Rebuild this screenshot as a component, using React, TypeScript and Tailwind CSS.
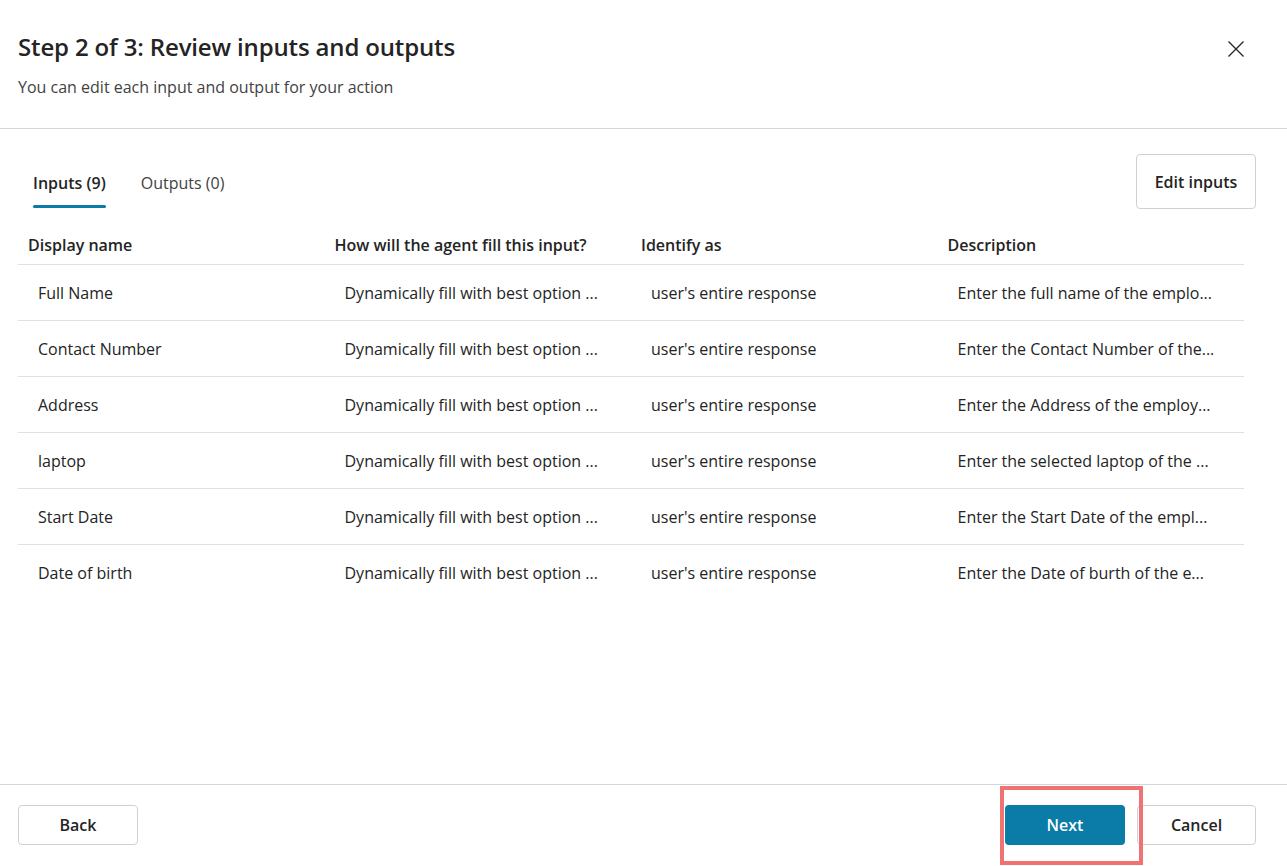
import React from 'react'

const font = { fontFamily: '"Segoe UI", "Open Sans", "Noto Sans", sans-serif' }

type Row = {
    name: string
    fill: string
    identify: string
    description: string
}

const rows: Row[] = [
    { name: 'Full Name', fill: 'Dynamically fill with best option ...', identify: "user's entire response", description: 'Enter the full name of the emplo...' },
    { name: 'Contact Number', fill: 'Dynamically fill with best option ...', identify: "user's entire response", description: 'Enter the Contact Number of the...' },
    { name: 'Address', fill: 'Dynamically fill with best option ...', identify: "user's entire response", description: 'Enter the Address of the employ...' },
    { name: 'laptop', fill: 'Dynamically fill with best option ...', identify: "user's entire response", description: 'Enter the selected laptop of the ...' },
    { name: 'Start Date', fill: 'Dynamically fill with best option ...', identify: "user's entire response", description: 'Enter the Start Date of the empl...' },
    { name: 'Date of birth', fill: 'Dynamically fill with best option ...', identify: "user's entire response", description: 'Enter the Date of burth of the e...' },
]

const headers = ['Display name', 'How will the agent fill this input?', 'Identify as', 'Description']

function OutlineButton({ children, className }: { children: React.ReactNode; className?: string }) {
    return (
        <button
            className={
                'rounded-[4px] border border-[#d1d1d1] bg-white text-[16px] font-semibold text-[#242424] ' +
                (className ?? '')
            }
        >
            {children}
        </button>
    )
}

export default function App() {
    return (
        <div className="flex h-[866px] w-[1287px] flex-col overflow-hidden bg-white text-[#242424]" style={font}>
            {/* Header */}
            <div className="flex h-[129px] shrink-0 items-start justify-between border-b border-[#d6d6d6] pl-[18px] pr-[41px] pt-[30px]">
                <div>
                    <h1 className="text-[24px] font-semibold leading-[34px] tracking-[-0.15px]">
                        Step 2 of 3: Review inputs and outputs
                    </h1>
                    <p className="mt-[12px] text-[16px] leading-[22px] text-[#424242]">
                        You can edit each input and output for your action
                    </p>
                </div>
                <button className="mt-[9px] text-[#242424]" aria-label="Close">
                    <svg width="20" height="20" viewBox="0 0 20 20" fill="none" stroke="currentColor" strokeWidth="1.3">
                        <path d="M2.5 2.5 L17.5 17.5 M17.5 2.5 L2.5 17.5" />
                    </svg>
                </button>
            </div>

            {/* Body */}
            <div className="flex flex-1 flex-col pl-[18px] pr-[31px]">
                <div className="flex items-start justify-between pt-[25px]">
                    <div className="flex gap-[35px] pl-[15px] pt-[18px]">
                        <div className="flex flex-col">
                            <span className="text-[16px] font-semibold leading-[22px]">Inputs (9)</span>
                            <span className="mt-[11px] h-[3px] rounded-full bg-[#0b7ba7]" />
                        </div>
                        <span className="text-[16px] leading-[22px] text-[#424242]">Outputs (0)</span>
                    </div>
                    <OutlineButton className="h-[55px] w-[120px]">Edit inputs</OutlineButton>
                </div>

                <div className="mt-[16px] w-[1226px]">
                    <div className="grid h-[40px] grid-cols-4 border-b border-[#e0e0e0]">
                        {headers.map((h) => (
                            <div key={h} className="flex items-center pl-[10px] text-[16px] font-semibold">
                                {h}
                            </div>
                        ))}
                    </div>
                    {rows.map((r, idx) => (
                        <div
                            key={r.name}
                            className={
                                'grid h-[56px] grid-cols-4 text-[16px] text-[#242424] ' +
                                (idx < rows.length - 1 ? 'border-b border-[#e0e0e0]' : '')
                            }
                        >
                            <div className="flex items-center truncate pl-[20px] pr-[20px]">{r.name}</div>
                            <div className="flex items-center pl-[20px] pr-[12px]">
                                <span className="truncate">{r.fill}</span>
                            </div>
                            <div className="flex items-center pl-[20px] pr-[12px]">
                                <span className="truncate">{r.identify}</span>
                            </div>
                            <div className="flex items-center pl-[20px] pr-[12px]">
                                <span className="truncate">{r.description}</span>
                            </div>
                        </div>
                    ))}
                </div>
            </div>

            {/* Footer */}
            <div className="flex h-[82px] shrink-0 items-start justify-between border-t border-[#d6d6d6] px-[18px] pt-[20px]">
                <OutlineButton className="h-[40px] w-[120px]">Back</OutlineButton>
                <div className="relative flex gap-[12px] pr-[13px]">
                    <button className="h-[40px] w-[120px] rounded-[4px] bg-[#0b7ba7] text-[16px] font-semibold text-white">
                        Next
                    </button>
                    <OutlineButton className="h-[40px] w-[119px]">Cancel</OutlineButton>
                    {/* highlight annotation */}
                    <div className="pointer-events-none absolute left-[-5px] top-[-19px] h-[79px] w-[143px] border-[4px] border-[#ef7373]" />
                </div>
            </div>
        </div>
    )
}
